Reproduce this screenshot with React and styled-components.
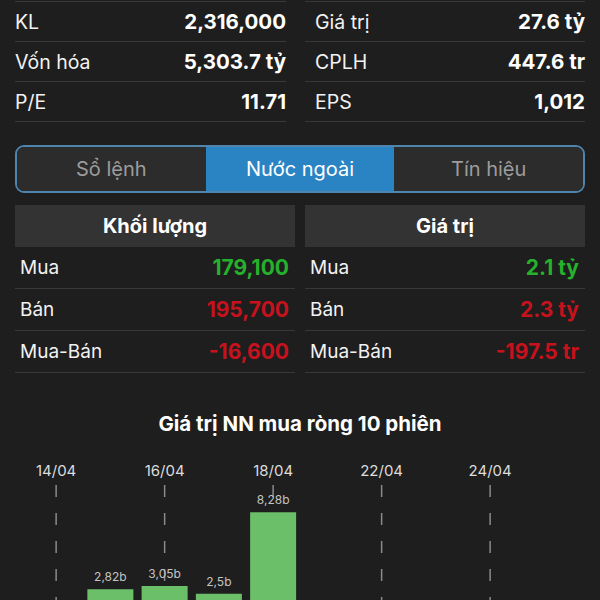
import React from 'react';
import styled, { createGlobalStyle } from 'styled-components';

const GlobalStyle = createGlobalStyle`
  body {
    margin: 0;
    background: #1e1e1e;
    font-family: Inter, "Liberation Sans", sans-serif;
    color: #ffffff;
  }
`;

const Page = styled.div`
  padding: 1px 15px 0;
`;

const StatsGrid = styled.div`
  display: grid;
  grid-template-columns: 271px 1fr;
  column-gap: 19px;
`;

const StatColumn = styled.div`
  border-bottom: 1px solid #383838;
`;

const StatRow = styled.div`
  height: 39px;
  border-top: 1px solid #383838;
  display: flex;
  align-items: center;
  justify-content: space-between;
  padding-left: ${p => (p.$inset ? '10px' : '0')};
`;

const StatLabel = styled.span`
  font-size: 19.5px;
  color: #f2f2f2;
`;

const StatValue = styled.span`
  font-size: 20.5px;
  font-weight: 700;
  color: #ffffff;
`;

const Tabs = styled.div`
  margin-top: 23px;
  height: 44px;
  border: 2px solid #4f84ad;
  border-radius: 9px;
  display: flex;
  overflow: hidden;
`;

const Tab = styled.div`
  flex: 1;
  display: flex;
  align-items: center;
  justify-content: center;
  font-size: 20px;
  background: ${p => (p.$active ? '#2a84c4' : '#2c2c2c')};
  color: ${p => (p.$active ? '#ffffff' : '#9c9c9c')};
`;

const Tables = styled.div`
  margin-top: 12px;
  display: grid;
  grid-template-columns: 1fr 1fr;
  column-gap: 10px;
`;

const TableHeader = styled.div`
  height: 42px;
  background: #333333;
  display: flex;
  align-items: center;
  justify-content: center;
  font-size: 20px;
  font-weight: 700;
`;

const TableRow = styled.div`
  height: 41px;
  border-bottom: 1px solid #383838;
  display: flex;
  align-items: center;
  justify-content: space-between;
  padding: 0 6px 0 5px;
`;

const RowLabel = styled.span`
  font-size: 19px;
  color: #f2f2f2;
`;

const RowValue = styled.span`
  font-size: 21px;
  font-weight: 700;
  color: ${p => (p.$tone === 'up' ? '#26b12d' : '#c7121d')};
`;

const ChartTitle = styled.div`
  margin-top: 39px;
  height: 24px;
  line-height: 24px;
  text-align: center;
  font-size: 20.5px;
  font-weight: 700;
`;

const ChartSvg = styled.svg`
  display: block;
  margin-top: 9px;
`;

const stats = [
  [
    ['KL', '2,316,000'],
    ['Vốn hóa', '5,303.7 tỷ'],
    ['P/E', '11.71'],
  ],
  [
    ['Giá trị', '27.6 tỷ'],
    ['CPLH', '447.6 tr'],
    ['EPS', '1,012'],
  ],
];

const tables = [
  {
    title: 'Khối lượng',
    rows: [
      ['Mua', '179,100', 'up'],
      ['Bán', '195,700', 'down'],
      ['Mua-Bán', '-16,600', 'down'],
    ],
  },
  {
    title: 'Giá trị',
    rows: [
      ['Mua', '2.1 tỷ', 'up'],
      ['Bán', '2.3 tỷ', 'down'],
      ['Mua-Bán', '-197.5 tr', 'down'],
    ],
  },
];

// net foreign buy value per session, in billions
const sessions = [
  { date: '14/04', value: 0 },
  { date: '15/04', value: 2.82 },
  { date: '16/04', value: 3.05 },
  { date: '17/04', value: 2.5 },
  { date: '18/04', value: 8.28 },
  { date: '21/04', value: 0 },
  { date: '22/04', value: 0 },
  { date: '23/04', value: 0 },
  { date: '24/04', value: 0 },
  { date: '25/04', value: 0 },
];

const SLOT = 54.25;
const LEFT = 14;
const BASE = 184;
const SCALE = 14.1;

const NetChart = () => (
  <ChartSvg width="570" height="155" viewBox="0 0 570 155">
    {sessions.map((s, i) => {
      if (i % 2) return null;
      const x = LEFT + SLOT * i + SLOT / 2;
      return (
        <g key={s.date}>
          <text x={x} y="31" textAnchor="middle" fontSize="15" fill="#dcdcdc" fontFamily="Inter, sans-serif">
            {s.date}
          </text>
          <line x1={x} y1="40" x2={x} y2="155" stroke="#8a8a8a" strokeWidth="1.5" strokeDasharray="12 16" />
        </g>
      );
    })}
    {sessions.filter(s => s.value > 0).map(s => {
      const i = sessions.indexOf(s);
      const cx = LEFT + SLOT * i + SLOT / 2;
      const h = s.value * SCALE;
      const y = BASE - h;
      return (
        <g key={'b' + s.date}>
          <rect x={cx - 23} y={y} width="46" height={h} fill="#6bbf69" />
          <text x={cx} y={y - 8} textAnchor="middle" fontSize="12" fill="#c4c4c4" fontFamily="Inter, sans-serif">
            {String(s.value).replace('.', ',')}b
          </text>
        </g>
      );
    })}
  </ChartSvg>
);

const App = () => (
  <Page>
    <GlobalStyle />
    <StatsGrid>
      {stats.map((col, ci) => (
        <StatColumn key={ci}>
          {col.map(([label, value]) => (
            <StatRow key={label} $inset={ci === 1}>
              <StatLabel>{label}</StatLabel>
              <StatValue>{value}</StatValue>
            </StatRow>
          ))}
        </StatColumn>
      ))}
    </StatsGrid>

    <Tabs>
      <Tab>Sổ lệnh</Tab>
      <Tab $active>Nước ngoài</Tab>
      <Tab>Tín hiệu</Tab>
    </Tabs>

    <Tables>
      {tables.map(t => (
        <div key={t.title}>
          <TableHeader>{t.title}</TableHeader>
          {t.rows.map(([label, value, tone]) => (
            <TableRow key={label}>
              <RowLabel>{label}</RowLabel>
              <RowValue $tone={tone}>{value}</RowValue>
            </TableRow>
          ))}
        </div>
      ))}
    </Tables>

    <ChartTitle>Giá trị NN mua ròng 10 phiên</ChartTitle>
    <NetChart />
  </Page>
);

export default App;
